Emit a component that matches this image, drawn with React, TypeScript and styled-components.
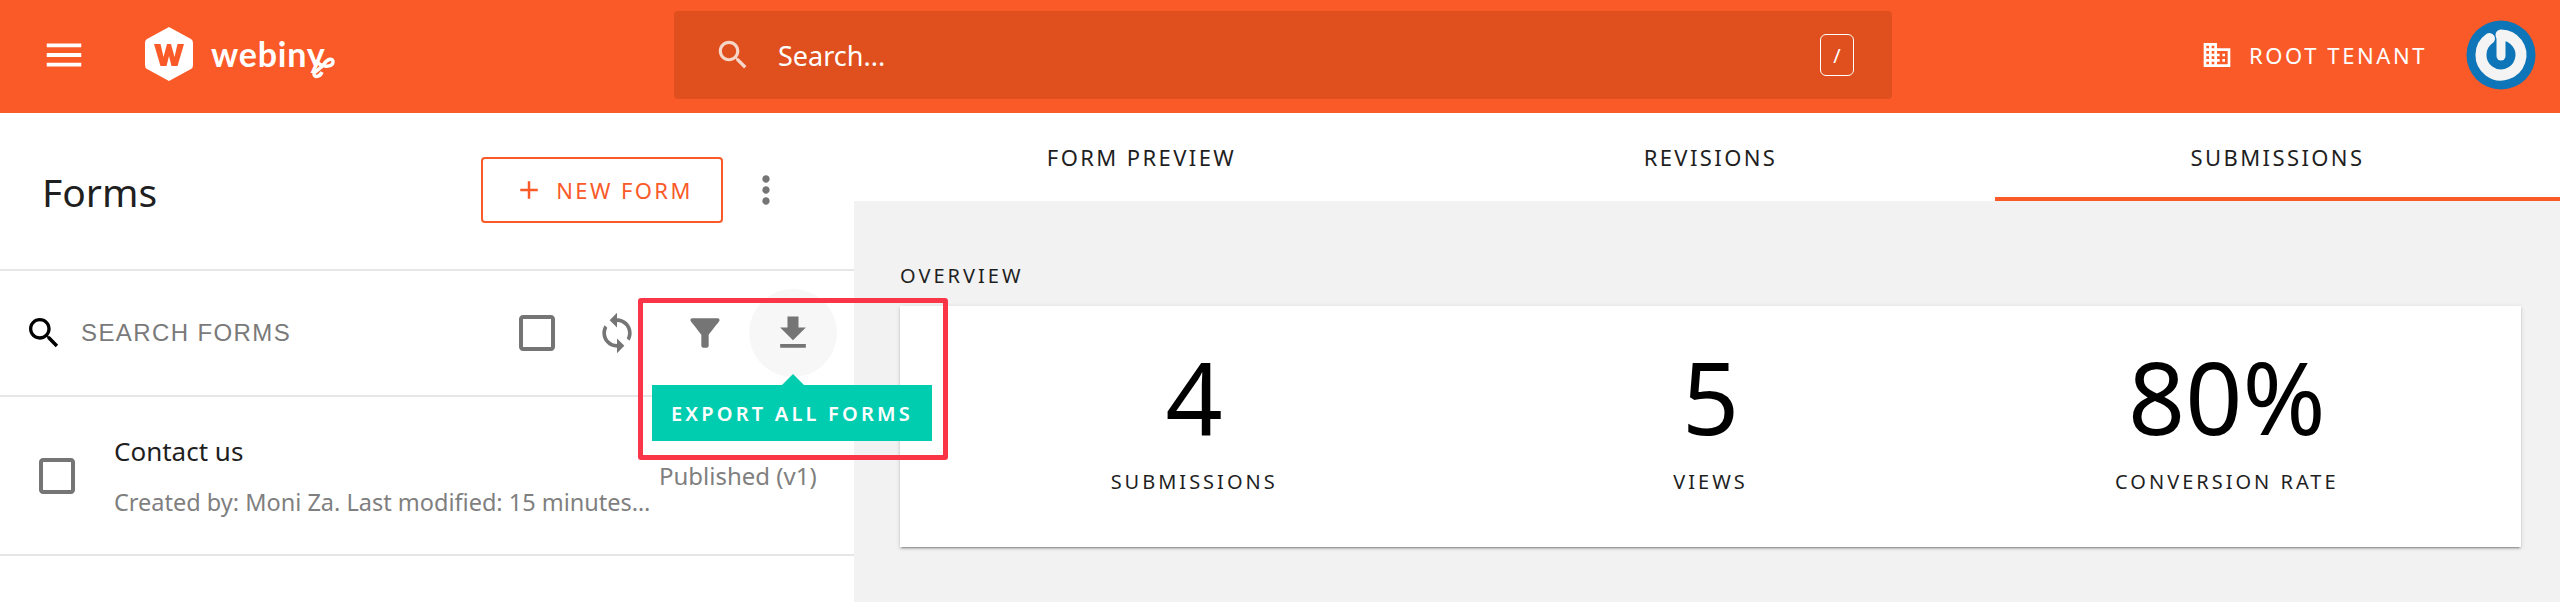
import React from "react";
import styled, { createGlobalStyle } from "styled-components";

const GlobalStyle = createGlobalStyle`
    html, body{
        margin: 0;
        padding: 0;
        background: #fff;
    }
    body{
        width: 2560px;
        height: 602px;
        overflow: hidden;
        font-family: "Noto Sans", sans-serif;
    }
`;

const orange = "#fa5a28";

const Page = styled.div`
    position: relative;
    width: 2560px;
    height: 602px;
    display: flex;
    flex-direction: column;
`;

const TopBar = styled.header`
    height: 113px;
    flex: none;
    background: ${orange};
    display: flex;
    align-items: center;
    color: #fff;
`;

const MenuButton = styled.div`
    width: 144px;
    padding-left: 41px;
    margin-bottom: 3px;
    box-sizing: border-box;
    display: flex;
    flex: none;
`;

const Logo = styled.div`
    width: 530px;
    flex: none;
    display: flex;
    align-items: center;
    gap: 17px;
    margin-bottom: 6px;
`;

const LogoWord = styled.span`
    font-family: "Lato", sans-serif;
    font-weight: 700;
    font-size: 34px;
    letter-spacing: 0.8px;
`;

const LogoTail = styled.svg`
    margin-left: -35px;
    margin-top: 24px;
`;

const SearchBar = styled.div`
    width: 1218px;
    height: 88px;
    flex: none;
    margin-bottom: 3px;
    border-radius: 4px;
    background: #e0501e;
    display: flex;
    align-items: center;
    padding: 0 38px 0 40px;
    box-sizing: border-box;
`;

const SearchText = styled.span`
    flex: 1;
    margin-left: 26px;
    font-size: 27px;
    color: #fff;
`;

const SlashKey = styled.span`
    width: 34px;
    height: 42px;
    box-sizing: border-box;
    border: 1px solid #fff;
    border-radius: 6px;
    display: flex;
    align-items: center;
    justify-content: center;
    font-size: 20px;
`;

const TenantBlock = styled.div`
    display: flex;
    align-items: center;
    flex: none;
    margin-left: 309px;
    margin-bottom: 3px;
`;

const Tenant = styled.div`
    display: flex;
    align-items: center;
    gap: 16px;
    font-size: 22px;
    letter-spacing: 2.6px;
    width: 265px;
    flex: none;
`;

const Body = styled.div`
    flex: 1;
    display: flex;
    min-height: 0;
`;

const LeftPanel = styled.aside`
    width: 854px;
    flex: none;
    background: #fff;
`;

const TitleRow = styled.div`
    height: 158px;
    box-sizing: border-box;
    border-bottom: 2px solid #e6e6e6;
    display: flex;
    align-items: center;
    padding: 0 0 0 42px;
`;

const Title = styled.h1`
    margin: 0;
    flex: 1;
    font-size: 39px;
    font-weight: 400;
    color: #1f1f1f;
`;

const NewButton = styled.div`
    width: 242px;
    height: 66px;
    box-sizing: border-box;
    border: 2px solid ${orange};
    border-radius: 4px;
    display: flex;
    align-items: center;
    justify-content: center;
    gap: 12px;
    padding-left: 3px;
    color: ${orange};
    font-size: 22px;
    letter-spacing: 2.4px;
    margin-top: -3px;
`;

const MoreIcon = styled.div`
    width: 86px;
    margin-right: 45px;
    display: flex;
    justify-content: center;
    margin-top: -3px;
`;

const FilterRow = styled.div`
    height: 126px;
    box-sizing: border-box;
    border-bottom: 2px solid #e6e6e6;
    display: flex;
    align-items: center;
    padding-left: 24px;
`;

const FilterText = styled.span`
    flex: 1;
    margin-left: 17px;
    font-family: "Liberation Sans", sans-serif;
    font-size: 24px;
    letter-spacing: 1.4px;
    color: #7a7a7a;
`;

const ToolIcon = styled.div<{ $hover?: boolean; $narrow?: boolean }>`
    width: ${(p) => (p.$narrow ? "72px" : "88px")};
    height: 88px;
    flex: none;
    border-radius: 50%;
    display: flex;
    align-items: center;
    justify-content: center;
    background: ${(p) => (p.$hover ? "#f7f7f7" : "transparent")};
`;

const ToolIcons = styled.div`
    display: flex;
    margin-right: 17px;
`;

const FormRow = styled.div`
    height: 159px;
    box-sizing: border-box;
    border-bottom: 2px solid #e6e6e6;
    display: flex;
    align-items: center;
    padding-left: 33px;
`;

const FormInfo = styled.div`
    width: 540px;
    flex: none;
    margin-left: 33px;
    margin-right: 5px;
`;

const FormName = styled.div`
    font-size: 26px;
    color: #1f1f1f;
    margin-bottom: 17px;
    line-height: 36px;
`;

const FormMeta = styled.div`
    font-size: 23.5px;
    line-height: 32px;
    color: #7f7f7f;
    white-space: nowrap;
    overflow: hidden;
    text-overflow: ellipsis;
`;

const Status = styled.span`
    font-size: 24px;
    color: #7f7f7f;
    white-space: nowrap;
`;

const RightPanel = styled.main`
    flex: 1;
    background: #f2f2f2;
    display: flex;
    flex-direction: column;
`;

const Tabs = styled.nav`
    height: 88px;
    flex: none;
    background: #fff;
    padding-left: 3px;
    display: grid;
    grid-template-columns: 569px 569px 1fr;
`;

const Tab = styled.div<{ $active?: boolean }>`
    display: flex;
    align-items: center;
    justify-content: center;
    box-sizing: border-box;
    padding-top: ${(p) => (p.$active ? "3px" : "0")};
    border-bottom: ${(p) => (p.$active ? `4px solid ${orange}` : "0")};
    font-size: 22px;
    letter-spacing: 2.4px;
    color: #1f1f1f;
`;

const Overview = styled.section`
    padding: 63px 39px 0 46px;
`;

const OverviewLabel = styled.div`
    font-size: 20px;
    letter-spacing: 3px;
    line-height: 24px;
    color: #1f1f1f;
    margin-bottom: 18px;
`;

const StatsCard = styled.div`
    height: 241px;
    background: #fff;
    padding: 0 36px;
    display: grid;
    grid-template-columns: repeat(3, 1fr);
    box-shadow: 0 3px 1px -2px rgba(0, 0, 0, 0.2), 0 2px 2px rgba(0, 0, 0, 0.14), 0 1px 5px rgba(0, 0, 0, 0.12);
`;

const Stat = styled.div`
    display: flex;
    flex-direction: column;
    align-items: center;
    padding-top: 30px;
`;

const StatValue = styled.div`
    font-size: 100px;
    line-height: 120px;
    color: #000;
`;

const StatLabel = styled.div`
    font-size: 20px;
    letter-spacing: 3px;
    line-height: 28px;
    color: #1f1f1f;
    margin-top: 12px;
`;

const Highlight = styled.div`
    position: absolute;
    left: 638px;
    top: 298px;
    width: 310px;
    height: 162px;
    box-sizing: border-box;
    border: 5px solid #fb3548;
    border-radius: 3px;
`;

const Tooltip = styled.div`
    position: absolute;
    left: 652px;
    top: 385px;
    width: 280px;
    height: 56px;
    background: #00ccb0;
    color: #fff;
    display: flex;
    align-items: center;
    justify-content: center;
    font-size: 20px;
    font-weight: 600;
    letter-spacing: 3.2px;
    white-space: nowrap;

    &::before{
        content: "";
        position: absolute;
        left: 130px;
        top: -11px;
        width: 0;
        height: 0;
        border-left: 11px solid transparent;
        border-right: 11px solid transparent;
        border-bottom: 11px solid #00ccb0;
    }
`;

const Icon = ({ d, size, color }: { d: string; size: number; color: string }): JSX.Element => (
    <svg width={size} height={size} viewBox="0 0 24 24" fill={color}>
        <path d={d} />
    </svg>
);

const paths = {
    menu: "M3 18h18v-2H3v2zm0-5h18v-2H3v2zm0-7v2h18V6H3z",
    search: "M15.5 14h-.79l-.28-.27C15.41 12.59 16 11.11 16 9.5 16 5.91 13.09 3 9.5 3S3 5.91 3 9.5 5.91 16 9.5 16c1.61 0 3.09-.59 4.23-1.57l.27.28v.79l5 4.99L20.49 19l-4.99-5zm-6 0C7.01 14 5 11.99 5 9.5S7.01 5 9.5 5 14 7.01 14 9.5 11.99 14 9.5 14z",
    domain: "M12 7V3H2v18h20V7H12zM6 19H4v-2h2v2zm0-4H4v-2h2v2zm0-4H4V9h2v2zm0-4H4V5h2v2zm4 12H8v-2h2v2zm0-4H8v-2h2v2zm0-4H8V9h2v2zm0-4H8V5h2v2zm10 12h-8v-2h2v-2h-2v-2h2v-2h-2V9h8v10zm-2-8h-2v2h2v-2zm0 4h-2v2h2v-2z",
    add: "M19 13h-6v6h-2v-6H5v-2h6V5h2v6h6v2z",
    more: "M12 8c1.1 0 2-.9 2-2s-.9-2-2-2-2 .9-2 2 .9 2 2 2zm0 2c-1.1 0-2 .9-2 2s.9 2 2 2 2-.9 2-2-.9-2-2-2zm0 6c-1.1 0-2 .9-2 2s.9 2 2 2 2-.9 2-2-.9-2-2-2z",
    checkbox: "M19 5v14H5V5h14m0-2H5c-1.1 0-2 .9-2 2v14c0 1.1.9 2 2 2h14c1.1 0 2-.9 2-2V5c0-1.1-.9-2-2-2z",
    sync: "M12 4V1L8 5l4 4V6c3.31 0 6 2.69 6 6 0 1.01-.25 1.97-.7 2.8l1.46 1.46C19.54 15.03 20 13.57 20 12c0-4.42-3.58-8-8-8zm0 14c-3.31 0-6-2.69-6-6 0-1.01.25-1.97.7-2.8L5.24 7.74C4.46 8.97 4 10.43 4 12c0 4.42 3.58 8 8 8v3l4-4-4-4v3z",
    filter: "M4.25 5.61C6.27 8.2 10 13 10 13v6c0 .55.45 1 1 1h2c.55 0 1-.45 1-1v-6s3.72-4.8 5.74-7.39c.51-.66.04-1.61-.79-1.61H5.04c-.83 0-1.3.95-.79 1.61z",
    download: "M19 9h-4V3H9v6H5l7 7 7-7zM5 18v2h14v-2H5z",
};

const LogoMark = (): JSX.Element => (
    <svg width="50" height="56" viewBox="0 0 50 56">
        <path d="M25 1 L47 13 Q49 14 49 17 L49 39 Q49 42 47 43 L25 55 L3 43 Q1 42 1 39 L1 17 Q1 14 3 13 Z" fill="#fff" />
        <path d="M10 18 H16.5 L19.5 31 L23 18 H27 L30.5 31 L33.5 18 H40 L33.5 40 H27.5 L25 30 L22.5 40 H16.5 Z" fill={orange} />
    </svg>
);

const Avatar = (): JSX.Element => (
    <svg width="70" height="70" viewBox="0 0 70 70">
        <circle cx="35" cy="35" r="34.5" fill="#0d75b8" />
        <path d="M35 15 A 20 20 0 1 1 23.5 18.6" fill="none" stroke="#f4f4f4" strokeWidth="11" strokeLinecap="round" />
        <path d="M35 15 V 36" fill="none" stroke="#f4f4f4" strokeWidth="9" strokeLinecap="round" />
    </svg>
);

export default function App(): JSX.Element {
    return <Page>
        <GlobalStyle />
        <TopBar>
            <MenuButton><Icon d={paths.menu} size={46} color="#fff" /></MenuButton>
            <Logo>
                <LogoMark />
                <LogoWord>webiny</LogoWord>
                <LogoTail width="28" height="30" viewBox="0 0 28 30">
                    <path d="M8 9 C 12 17 25 17 25 11 C25 7 20 7 16 13 C 12 19 6 20 6 23 C6 27 12 26 14 21" fill="none" stroke="#fff" strokeWidth="3.5" />
                </LogoTail>
            </Logo>
            <SearchBar>
                <Icon d={paths.search} size={38} color="#f6d6c8" />
                <SearchText>Search...</SearchText>
                <SlashKey>/</SlashKey>
            </SearchBar>
            <TenantBlock>
                <Tenant>
                    <Icon d={paths.domain} size={32} color="#fff" />
                    <span>ROOT TENANT</span>
                </Tenant>
                <Avatar />
            </TenantBlock>
        </TopBar>
        <Body>
            <LeftPanel>
                <TitleRow>
                    <Title>Forms</Title>
                    <NewButton>
                        <Icon d={paths.add} size={30} color={orange} />
                        <span>NEW FORM</span>
                    </NewButton>
                    <MoreIcon><Icon d={paths.more} size={44} color="#757575" /></MoreIcon>
                </TitleRow>
                <FilterRow>
                    <Icon d={paths.search} size={40} color="#000" />
                    <FilterText>SEARCH FORMS</FilterText>
                    <ToolIcons>
                        <ToolIcon $narrow><Icon d={paths.checkbox} size={48} color="#757575" /></ToolIcon>
                        <ToolIcon><Icon d={paths.sync} size={44} color="#757575" /></ToolIcon>
                        <ToolIcon><Icon d={paths.filter} size={44} color="#757575" /></ToolIcon>
                        <ToolIcon $hover><Icon d={paths.download} size={44} color="#757575" /></ToolIcon>
                    </ToolIcons>
                </FilterRow>
                <FormRow>
                    <Icon d={paths.checkbox} size={48} color="#757575" />
                    <FormInfo>
                        <FormName>Contact us</FormName>
                        <FormMeta>Created by: Moni Za. Last modified: 15 minutes ago.</FormMeta>
                    </FormInfo>
                    <Status>Published (v1)</Status>
                </FormRow>
            </LeftPanel>
            <RightPanel>
                <Tabs>
                    <Tab>FORM PREVIEW</Tab>
                    <Tab>REVISIONS</Tab>
                    <Tab $active>SUBMISSIONS</Tab>
                </Tabs>
                <Overview>
                    <OverviewLabel>OVERVIEW</OverviewLabel>
                    <StatsCard>
                        <Stat><StatValue>4</StatValue><StatLabel>SUBMISSIONS</StatLabel></Stat>
                        <Stat><StatValue>5</StatValue><StatLabel>VIEWS</StatLabel></Stat>
                        <Stat><StatValue>80%</StatValue><StatLabel>CONVERSION RATE</StatLabel></Stat>
                    </StatsCard>
                </Overview>
            </RightPanel>
        </Body>
        <Highlight />
        <Tooltip>EXPORT ALL FORMS</Tooltip>
    </Page>;
}
